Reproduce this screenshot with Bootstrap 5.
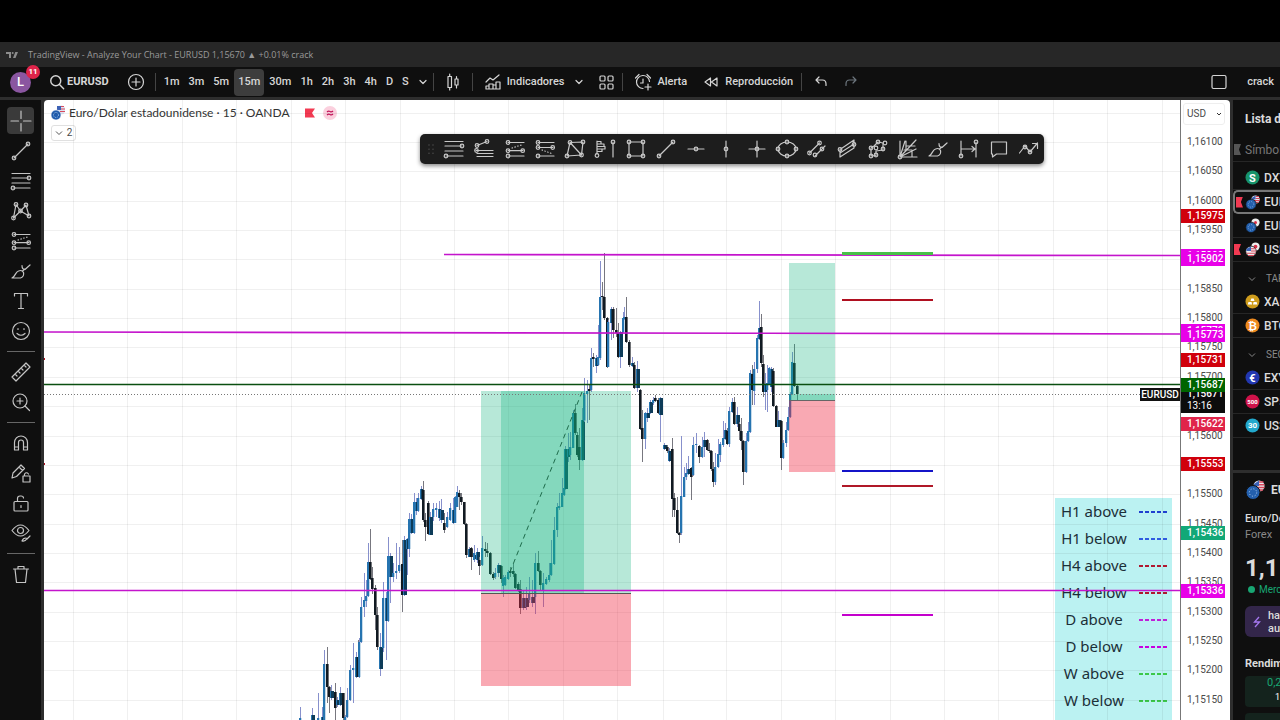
<!DOCTYPE html>
<html lang="es">
<head>
<meta charset="utf-8">
<meta name="viewport" content="width=device-width, initial-scale=1">
<title>TradingView - Analyze Your Chart</title>
<link href="https://cdn.jsdelivr.net/npm/bootstrap@5.3.0/dist/css/bootstrap.min.css" rel="stylesheet">
<style>
:root{--ui:Roboto,"Liberation Sans",sans-serif;--ink:#0f0f0f;--line:#2e2e2e;--txt:#dbdbdb}
body{font-family:var(--ui);font-size:11px;line-height:16px;background:var(--line);color:var(--txt)}
button{font:inherit;color:inherit;background:none;border:0;padding:0}
svg{display:block}
.ico{width:24px;height:24px;fill:none;stroke:currentColor;stroke-width:1.2;stroke-linecap:round;stroke-linejoin:round;flex:none}
.ico .knot{fill:var(--knot,#0f0f0f)}
.letterbox{height:42px;background:#000}
.titlebar{height:25px;background:#272727;color:#9a9a9a;font:9px/14px "Open Sans",sans-serif;padding-left:6px;gap:10px}
.topbar{height:30px;background:var(--ink);margin-bottom:3px;font-weight:500;color:#d6d6d6}
.slot{display:flex;align-items:center;justify-content:center;height:28px;gap:2px}
.w-nav{width:30px}
.w-tight{width:20px}
.w-wide{width:38px}
.w-grid{width:24px}
.compare{margin:0 4px 0 12px}
.find{margin-left:16px;gap:0}
.find .ico{width:20px;height:20px;stroke-width:1.7}
.layoutname{padding-right:6px}
.avatar{width:21px;height:21px;border-radius:50%;background:#8a56a0;color:#fff;font-size:13px;margin-left:10px;position:relative}
.avatar .count{position:absolute;left:16px;top:-7px;width:14px;height:14px;border-radius:50%;background:#e0244a;font-size:8px;line-height:14px;font-weight:700}
.vline{width:1px;height:18px;background:#444}
.tf{gap:1px}
.tf button{height:27px;padding:0 4px;border-radius:4px}
.tf .on{background:#3d3d3d}
.rail{width:41px;background:var(--ink);padding-top:6px;margin-right:3px;color:#c4c4c4}
.rail button{width:27px;height:27px;margin:1px 0 2px;border-radius:4px;display:flex;align-items:center;justify-content:center}
.rail .on{background:#3a3a3a;--knot:#3a3a3a}
.rail hr{width:28px;margin:5px 0;border-top:1px solid #666;opacity:1}
.pane{background:#fff;border-radius:4px 4px 0 0;margin-right:3px;color:#4a4a4a}
.plot{min-width:0}
.canvas{position:absolute;inset:0;width:100%;height:100%;z-index:1;pointer-events:none}
.symbolline{font:12px/16px Lato,sans-serif;color:#333;padding:5px 0 0 7px;gap:4px}
.symbolline span{margin-right:5px}
.count2{border:1px solid #e0e0e0;border-radius:3px;margin:4px 0 0 7px;width:25px;height:16px;font-size:10px}
.drawbar{position:absolute;left:376px;top:34px;width:624px;height:30px;background:#1d1d1d;border-radius:5px;color:#c8c8c8;z-index:2;padding:0 0 0 3px;box-shadow:0 2px 4px #0007;--knot:#1d1d1d}
.drawbar .grip{width:16px;flex:none}
.keybox{position:absolute;right:8px;top:398px;bottom:0;width:117px;background:#bbf2f2;color:#1c2f38;font:15px/27px "Noto Sans",sans-serif}
.keybox th{font-weight:400;text-align:center;width:78px;padding:0}
.keybox td{padding:0}
.keybox i{display:block;width:28px;height:2px;margin-left:6px}
.scale{width:50px;border-left:1px solid #777;font-size:10px;line-height:14px}
.scale .unit{height:22px;margin:3px 3px 0 2px;border:1px solid #eee;border-radius:3px;padding:0 1px 0 3px;width:42px}
.tick,.tag{position:absolute;left:0;margin-top:-7px;padding-left:6px;height:14px;width:44px}
.tag{color:#fff;font-weight:500;margin-top:-6px}
.sym{position:absolute;right:0;top:288px;height:13px;width:40px;background:#111;color:#fff;font-size:10px;line-height:13px;font-weight:500;text-align:center;z-index:2}
.side{width:47px;white-space:nowrap;overflow:hidden}
.side section{background:var(--ink)}
.side svg{flex:none}
.lists{height:370px;margin-bottom:3px}
.lists h2{height:39px;padding-left:12px;font-size:12px}
.lists .head{color:#777;padding:3px 0 0 12px;height:23px;font-weight:400}
.item{height:24px;border-bottom:1px solid #262626;font-weight:500;padding-left:12px;gap:4px;position:relative;font-size:12px}
.item.sel{border:2px solid #777;border-right:0;border-radius:5px 0 0 5px;padding-left:10px}
.grp{height:28px;padding:6px 0 0 15px;gap:10px;font-size:10px;color:#8a8a8a}
.marker{position:absolute;left:1px;width:7px;height:11px;background:#f23a52;clip-path:polygon(0 0,100% 0,70% 50%,100% 100%,0 100%)}
.head .marker{background:#555;top:5px}
.detail>*{padding-left:12px}
.pairhead{height:34px;gap:6px;font-size:12px}
.price{font-size:24px;line-height:28px;font-weight:700;padding-top:11px}
.open{color:#18a673;font-size:10px}
.open i{width:7px;height:7px;margin-left:3px;background:#18a673}
.news{background:#33264a;border-radius:6px 0 0 6px;height:31px;margin:8px 0 0 12px;line-height:13px;font-weight:500;gap:6px}
.detail .news{padding-left:7px}
.detail h3{font-size:11px;line-height:16px;padding-top:19px;padding-bottom:4px}
.perf{background:#14231d;color:#18a673;border-radius:4px;margin:0 0 6px 12px;height:31px;line-height:14px;width:60px}
.detail .perf{padding-left:22px}
.perf div{font-size:9px}
</style>
</head>
<body class="vh-100 overflow-hidden d-flex flex-column">
<svg width="0" height="0" class="position-absolute" aria-hidden="true"><defs id="defs"></defs></svg>

<div class="letterbox flex-shrink-0"></div>
<header class="titlebar d-flex align-items-center flex-shrink-0">
  <svg width="12" height="8" viewBox="0 0 12 8" fill="#8c8c8c"><path d="M0 1h5v6H3V3H0z"/><circle cx="6.7" cy="2" r="1"/><path d="M9.300 1H12L9.500 7H7z"/></svg>
  <span>TradingView - Analyze Your Chart - EURUSD 1,15670 ▲ +0.01% crack</span>
</header>

<nav class="topbar d-flex align-items-center flex-shrink-0">
  <button class="avatar slot" aria-label="Perfil">L<span class="count">11</span></button>
  <button class="slot find fw-bold"><svg class="ico" viewBox="0 0 24 24"><use href="#search"/></svg>EURUSD</button>
  <button class="slot w-nav compare" data-i="plus" aria-label="Comparar"></button>
  <span class="vline me-1"></span>
  <div class="tf d-flex" id="tf"></div>
  <button class="slot w-tight" data-i="chev" aria-label="Más intervalos"></button>
  <span class="vline"></span>
  <button class="slot w-wide" data-i="candles" aria-label="Velas"></button>
  <span class="vline me-2"></span>
  <button class="slot"><span data-i="indic"></span>Indicadores</button>
  <button class="slot w-nav" data-i="chev" aria-label="Plantillas"></button>
  <button class="slot w-grid" data-i="grid" aria-label="Disposición"></button>
  <span class="vline ms-1 me-1"></span>
  <button class="slot ps-1"><span data-i="alarm"></span>Alerta</button>
  <button class="slot ps-2 ms-1"><span data-i="rewind"></span>Reproducción</button>
  <span class="vline ms-2 me-1"></span>
  <button class="slot w-nav" data-i="undo" aria-label="Deshacer"></button>
  <button class="slot w-nav text-secondary" data-i="redo" aria-label="Rehacer"></button>
  <button class="slot ms-auto" data-i="square" aria-label="Diseño"></button>
  <button class="slot layoutname ms-3">crack</button>
</nav>

<main class="d-flex flex-fill" style="min-height:0">
  <aside class="rail d-flex flex-column align-items-center flex-shrink-0" id="rail"></aside>

  <div class="pane d-flex flex-fill overflow-hidden" style="min-width:0">
    <div class="plot position-relative flex-fill overflow-hidden">
      <div class="symbolline d-flex align-items-center">
        <svg width="14" height="16" viewBox="0 0 14 16"><circle cx="10" cy="5" r="4.500" fill="#dfe3f2"/><path d="M7 1.500h6M8 4h6M9 6.500h5" stroke="#d94a5c"/><path d="M6 1h4v4H6z" fill="#3d62b5"/><circle cx="5" cy="10" r="5" fill="#1f5cad" stroke="#fff" stroke-width=".6"/><circle cx="5" cy="10" r="2.500" fill="none" stroke="#9fc6ee" stroke-dasharray="1 1"/></svg>
        <span>Euro/Dólar estadounidense · 15 · OANDA</span>
        <svg width="38" height="16" viewBox="0 0 38 16"><path d="M6 3.500h10l-3 4.500 3 4.500H6z" fill="#f23a52"/><circle cx="31" cy="8" r="7" fill="#fbd0de"/><path d="M28 7q1.500-1.500 3-.500t3-.500M28 10q1.500-1.500 3-.500t3-.500" fill="none" stroke="#c2185b" stroke-width="1.200"/></svg>
      </div>
      <button class="count2 d-flex align-items-center justify-content-center gap-1 position-relative bg-white"><svg width="8" height="6" viewBox="0 0 8 6" fill="none" stroke="#555"><path d="M1 1.500l3 3 3-3"/></svg>2</button>
      <div class="keybox"><table><tbody id="key"></tbody></table></div>
      <svg class="canvas" id="chart" role="img" aria-label="Gráfico de velas EURUSD"></svg>
      <div class="drawbar d-flex align-items-center" id="draw"><span class="grip" data-i="grip"></span></div>
      <span class="sym">EURUSD</span>
    </div>
    <div class="scale position-relative flex-shrink-0" id="scale">
      <button class="unit d-flex align-items-center justify-content-between">USD<svg width="8" height="6" viewBox="0 0 8 6" fill="none" stroke="#333"><path d="M2 2l2 2 2-2"/></svg></button>
    </div>
  </div>

  <aside class="side flex-shrink-0 d-flex flex-column">
    <section class="lists flex-shrink-0">
      <h2 class="mb-0 fw-bold d-flex align-items-center">Lista de</h2>
      <div class="item head mb-1"><i class="marker"></i>Símbolo</div>
      <div id="l1"></div>
      <div class="grp d-flex align-items-center"><svg width="8" height="6" viewBox="0 0 8 6" fill="none" stroke="#888"><path d="M1 1.500l3 3 3-3"/></svg>TAR</div>
      <div id="l2"></div>
      <div class="grp d-flex align-items-center"><svg width="8" height="6" viewBox="0 0 8 6" fill="none" stroke="#888"><path d="M1 1.500l3 3 3-3"/></svg>SEC</div>
      <div id="l3"></div>
    </section>
    <section class="detail flex-fill">
      <div class="pairhead d-flex align-items-center fw-bold"><svg width="20" height="20" viewBox="0 0 20 20"><use href="#pairEU"/></svg>EU</div>
      <div class="fw-medium pt-1">Euro/Dó</div>
      <div style="color:#8a8a8a">Forex</div>
      <div class="price">1,1</div>
      <div class="open"><i class="d-inline-block rounded-circle me-1"></i>Merc</div>
      <div class="news d-flex align-items-center"><svg width="10" height="12" viewBox="0 0 10 12" fill="none" stroke="#a678f0" stroke-width="1.300"><path d="M7 1L2.500 6h5L3 11"/></svg><div>hac<br>aus</div></div>
      <h3 class="fw-bold mb-0">Rendim</h3>
      <div class="perf">0,2<div class="text-white ps-2">1</div></div>
      <div class="perf"></div>
    </section>
  </aside>
</main>
<script src="https://cdn.jsdelivr.net/npm/bootstrap@5.3.0/dist/js/bootstrap.bundle.min.js"></script>
<script>
const $ = id => document.getElementById(id);
const knots = (...p) => p.map(([x, y]) => `<circle class="knot" cx="${x}" cy="${y}" r="1.8"/>`).join('');
const path = d => `<path d="${d}"/>`;
const icons = {
  search: '<circle cx="10.500" cy="10.500" r="6"/>' + path('M15 15l5 5'),
  plus: '<circle cx="12" cy="12" r="7.500"/>' + path('M12 8v8M8 12h8'),
  chev: path('M9 10.500l3 3 3-3'),
  candles: path('M7 6.500h3.500v11H7zM8.700 4v2.500M8.700 17.500V20M14 9h3v6h-3zM15.500 6.500V9M15.500 15v3'),
  indic: path('M5 12l4-4 3 2 6-5M5 19v-3h3v3M8 19v-5h4v5M12 19v-4h3v4M15 19v-7h4v7zM5 19h14'),
  grid: '<rect x="6" y="6" width="5" height="5" rx="1"/><rect x="14" y="6" width="5" height="5" rx="1"/><rect x="6" y="14" width="5" height="5" rx="1"/><rect x="14" y="14" width="5" height="5" rx="1"/>',
  alarm: path('M18.500 11.500A6.500 6.500 0 1 0 12 18.500M12 9v4H9.500M4.500 8L8 4.500M16 4.500L19.500 8M17 14v6M14 17h6'),
  rewind: path('M11.500 8v8L6 12zM18 8v8l-5.500-4z'),
  undo: path('M10 7L7 10l3 3M7 10h6.500q3.500 0 3.500 4v1.500'),
  redo: path('M14 7l3 3-3 3M17 10h-6.500Q7 10 7 14v1.500'),
  square: '<rect x="5" y="5.500" width="14" height="13" rx="1.500"/>',
  cross: path('M12 2v7.500M12 14.500V22M2 12h7.500M14.500 12H22'),
  trend: path('M5 19L19 5') + knots([5, 19], [19, 5]),
  fib: path('M3 4.500h18M3 9h17M3 14h18M4 19h17') + knots([20, 9], [4, 19]),
  fibext: path('M5 8.500L15 4.500M4 13.500h17M5 16.500h16M5 19.500h16') + knots([15, 4.500], [5, 8.500], [4.500, 13.500]),
  pos: path('M5 5.500h16M5 13.700h15M5 19h16') + '<path stroke-dasharray="0.500 2.500" d="M9 11l11-3.500"/>' + knots([5, 5.500], [5, 13.700], [19.700, 13.700], [5, 19]),
  neg: path('M5 5.500h16M5 10.500h15M5 19h16') + '<path stroke-dasharray="0.500 2.500" d="M9 13l11 4"/>' + knots([5, 5.500], [5, 10.500], [19.700, 10.500], [5, 19]),
  pattern: path('M7 5.500L20 5l-1.500 13L4 19zL18.500 18') + knots([7, 5.500], [20, 5], [18.500, 18], [4, 19]),
  profile: path('M4 17V4M4 4.500h4v2.500H4M4 7h7v2.500H4M4 9.500h8V12H4M4 12h5v2.500H4M20 5v15') + knots([4, 18.500], [20, 5]),
  rect: path('M5 5h14v14H5z') + knots([5, 5], [19, 5], [19, 19], [5, 19]),
  hline: path('M4 12h16') + knots([12, 12]),
  vline: path('M12 4v16') + knots([12, 12]),
  cline: path('M4 12h16M12 4v16') + knots([12, 12]),
  ellipse: '<ellipse cx="12" cy="12" rx="9" ry="7"/>' + knots([3, 12], [21, 12], [12, 5], [12, 19]),
  pitch: path('M4.500 16L14.500 6M10 19L20 9') + knots([4.500, 16], [14.500, 6], [17, 12], [10, 18]),
  channel: path('M5 12.500L19 3v8L5 20zM5 16l14-9') + knots([5, 12.500], [19, 7.500]),
  path: path('M5 11v8l5-.500V14l7-1V6l-5-1-4 4z') + knots([5, 11], [5, 19], [10, 18], [10, 11], [17, 12], [19, 6], [12, 5]),
  fan: path('M4 20V4M4 20L9 4M4 20L20 3M4 20l16-8M4 20h17M10 14V4M10 9h9M8 13h8v7') + knots([4, 20]),
  brush: path('M3 19q4 0 8.500 0 4-1.500 3-5.500-1.500-3-5-1.500C6 13 7 17 3 19zM13 6.500q0 4 3 4L21 6M13.500 12l2.500-2'),
  range: path('M5 4v15M20 5v15M5 12h14M16 9.500l3 2.500-3 2.500') + knots([5, 19], [20, 5]),
  note: path('M4.500 5h15v12h-10l-4 3v-3h-1z'),
  zig: path('M2.500 16l5.500-7 5 6 7.500-9M15.500 6.500h5v5') + knots([8, 10], [13, 15]),
  xabcd: path('M4.500 19L7 5.500l4.500 6.500L17 6l3 11-8.500-5zM7 5.500') + knots([4.500, 19], [7, 5.500], [11.500, 12], [17, 6], [20, 17]),
  text: path('M5.500 7V4.500h13V7M12 4.500v15M9.500 19.500h5') ,
  smile: '<circle cx="12" cy="12" r="8.500"/>' + path('M9 9.500v1M15 9.500v1M8 14.500q4 3.500 8 0'),
  ruler: path('M3 17L17 3l4 4L7 21zM6 14l2 2M9 11l2 2M12 8l2 2M15 5l2 2'),
  zoom: '<circle cx="11" cy="11" r="7"/>' + path('M16 16l4.500 4.500M11 8v6M8 11h6'),
  magnet: path('M5.500 19v-7.500a6.500 6.500 0 0 1 13 0V19h-4v-7.500a2.500 2.500 0 0 0-5 0V19zM5.500 16h4M14.500 16h4'),
  penlock: path('M3 17l1-5 8-8 3.500 3.500-8 8zM10 6l3.500 3.500M14 15h7v6h-7zM15.500 15v-2q2-2.500 4 0'),
  lock: '<rect x="5" y="10.500" width="14" height="9.500" rx="1"/>' + path('M8.500 10.500V7.500q0-2.500 2.500-2.500h1q2.500 0 2.500 2M12 14.500v2'),
  eye: path('M3 9.500q8.500-11 17 0-8.500 11-17 0zM13 20q3 1 5-2.500M18 18l3-3M13 20q1-3 4-3') + '<circle cx="11.500" cy="9.500" r="3"/>',
  trash: path('M4.500 7h15M9 7V4.500h6V7M6 7l1.500 13.500h9L18 7'),
  grip: '<path stroke="#555" stroke-width="1.300" stroke-dasharray="0.100 4" d="M6 8v9M10 8v9"/>'
};
$('defs').innerHTML = Object.entries(icons).map(([k, v]) => `<g id="${k}">${v}</g>`).join('') +
 `<g id="pairEU"><circle cx="14" cy="6" r="5.500" fill="#e8e8ee"/><path d="M14 2h4.500M14 4.700h5.500M10 7.500h9.500M11 10h7" stroke="#d8475a" stroke-width="1.400"/><path d="M9 4l5-3.500V6H9z" fill="#3a63b8"/><circle cx="8" cy="12.500" r="7" fill="#2460ad" stroke="#0f0f0f"/><circle cx="8" cy="12.500" r="3.700" fill="none" stroke="#b4d0f2" stroke-dasharray="1 1.900"/></g>
  <g id="pairEJ"><circle cx="14" cy="6" r="5.500" fill="#eee"/><circle cx="14" cy="6" r="2" fill="#d8304a"/><circle cx="8" cy="12.500" r="7" fill="#2460ad" stroke="#0f0f0f"/><circle cx="8" cy="12.500" r="3.700" fill="none" stroke="#b4d0f2" stroke-dasharray="1 1.900"/></g>
  <g id="pairUJ"><circle cx="14" cy="6" r="5.500" fill="#eee"/><circle cx="14" cy="6" r="2.500" fill="#d8304a"/><circle cx="8" cy="12.500" r="7" fill="#eee" stroke="#0f0f0f"/><path d="M8 9h6M8 12h7M2 15h12M4 18h8" stroke="#d8475a" stroke-width="1.500"/><path d="M2 9l6-3v6H2z" fill="#3a63b8"/></g>`;
const icon = n => `<svg class="ico" viewBox="0 0 24 24" aria-hidden="true"><use href="#${n}"/></svg>`;

$('tf').innerHTML = '1m 3m 5m 15m 30m 1h 2h 3h 4h D S'.split(' ').map(t => `<button class="${t == '15m' ? 'on' : ''}">${t}</button>`).join('');
$('rail').innerHTML = 'cross trend fib xabcd pos brush text smile | ruler zoom | magnet penlock lock eye | trash'.split(' ')
  .map((n, i) => n == '|' ? '<hr>' : `<button aria-label="${n}" class="${i ? '' : 'on'}">${icon(n)}</button>`).join('');
$('draw').innerHTML += 'fib fibext pos neg pattern profile rect trend hline vline cline ellipse pitch channel path fan brush range note zig'.split(' ')
  .map(n => `<button class="flex-fill slot" aria-label="${n}">${icon(n)}</button>`).join('');
document.querySelectorAll('[data-i]').forEach(e => e.innerHTML = icon(e.dataset.i));

$('key').innerHTML = [['H1 above', '#1f3fd0'], ['H1 below', '#2f5be0'], ['H4 above', '#b01830'], ['H4 below', '#b01830'],
  ['D above', '#c020d8'], ['D below', '#c800e0'], ['W above', '#3cc84a'], ['W below', '#3cc84a']]
  .map(([t, c]) => `<tr><th scope="row">${t}</th><td><i style="background:repeating-linear-gradient(90deg,${c} 0 4px,transparent 4px 6px)"></i></td></tr>`).join('');

/* price scale: 1,16100 sits 42px below the top of the pane, 58.7px per 10 pips */
const yOf = p => Math.round(42 + (116100 - p) * 0.587);
const fmt = p => '1,' + String(p).slice(1);
let s = '';
for (let p = 116100; p >= 115150; p -= 50) if (![115900, 115650].includes(p)) s += `<span class="tick" style="top:${yOf(p)}px">${fmt(p)}</span>`;
for (const [p, c] of [[115908, '#e800e8'], [115902, '#e800e8'], [115779, '#e800e8'], [115773, '#e800e8'], [115975, '#d0000c'], [115731, '#d0000c'], [115671, '#0c0c0c'], [115687, '#006400'], [115622, '#e0244a'], [115553, '#d0000c'], [115436, '#12a877'], [115336, '#e800e8']])
  s += p == 115671 ? `<span class="tag" style="top:${yOf(p)}px;background:${c};height:25px;line-height:12px">${fmt(p)}<br><span class="fw-normal">13:16</span></span>`
    : `<span class="tag" style="top:${yOf(p)}px;background:${c}">${fmt(p)}</span>`;
$('scale').innerHTML += s;

/* watch list */
const disc = (c, t) => `<svg width="15" height="15" viewBox="0 0 15 15"><circle cx="7.500" cy="7.500" r="7" fill="${c}"/><text x="7.500" y="${t.length > 1 ? 10 : 11.500}" font-size="${t.length > 2 ? 6 : t.length > 1 ? 8 : 11}" font-weight="700" fill="#fff" text-anchor="middle">${t}</text></svg>`;
const gold = '<svg width="15" height="15" viewBox="0 0 15 15"><circle cx="7.500" cy="7.500" r="7" fill="#cf9d1d"/><path d="M5.500 7l.8-2.500h2.400l.8 2.500zM2.700 10.500l.8-2.500h3l.6 2.500zM8 10.500l.6-2.500h3l.8 2.500z" fill="#fff"/></svg>';
const pair = n => `<svg width="15" height="15" viewBox="0 0 20 20"><use href="#${n}"/></svg>`;
const rows = a => a.map(([t, i, f]) => `<div class="item d-flex align-items-center ${f == 2 ? 'sel' : ''}">${f ? '<i class="marker"></i>' : ''}${i}${t}</div>`).join('');
$('l1').innerHTML = rows([['DXY', disc('#17936a', 'S')], ['EUR', pair('pairEU'), 2], ['EUR', pair('pairEJ')], ['USD', pair('pairUJ'), 1]]);
$('l2').innerHTML = rows([['XAU', gold], ['BTC', disc('#ee8a1f', '₿')]]);
$('l3').innerHTML = rows([['EXY', disc('#2237b0', '€')], ['SP5', disc('#d0124a', '500')], ['US3', disc('#22a8cc', '30')]]);

/* candles: [x, top, bottom, high, low, kind] in thirds of a pixel from each block's origin;
   b rising, t dense teal, k falling */
const blocks = [
 [290, 470, `30 745 750 712 750 b|65 735 750 715 750 t|85 745 750 668 750 b|97 740 750 712 750 t|103 583 750 540 750 b|110 583 650 532 700 k|116 650 680 648 730 k|124 663 685 645 690 t|134 665 715 640 750 k|142 690 705 680 712 t|150 670 705 650 708 t|158 670 745 668 750 k|166 740 750 735 750 b|172 690 742 655 745 b|181 600 690 585 692 b|190 595 600 520 700 b|197 560 620 545 625 t|203 560 620 510 622 k|208 515 620 505 625 b|214 412 515 380 518 b|221 390 412 308 440 b|228 378 392 330 412 b|234 275 378 218 380 b|239 275 327 178 330 k|247 325 357 292 372 k|254 355 435 345 480 k|262 435 530 410 540 k|270 530 597 490 618 t|278 385 535 335 545 b|287 385 452 365 570 t|295 258 452 200 455 b|301 258 320 250 400 t|310 308 320 280 335 b|318 303 310 220 328 b|327 285 303 230 310 b|336 283 375 210 425 k|341 210 375 198 378 t|350 208 237 205 315 t|358 148 237 130 262 b|364 148 190 132 192 t|371 95 190 70 192 b|378 95 123 85 135 t|385 85 123 70 125 b|392 58 88 48 90 t|398 60 150 33 155 k|405 150 170 130 213 k|413 100 193 92 195 k|420 140 195 125 196 t|429 117 140 100 152 b|438 115 120 100 140 b|446 117 145 93 152 t|454 120 150 88 158 t|463 160 180 130 188 k|472 140 172 125 175 b|480 115 150 100 152 b|489 120 158 85 162 t|495 82 158 78 160 b|501 67 110 47 112 b|506 70 82 60 120 k|513 80 97 68 105 k|521 97 162 95 165 k|528 162 255 160 265 k|536 237 260 232 262 t|544 237 262 235 298 k|552 255 268 225 270 t|560 250 270 235 275 b`],
 [470, 380, `4 505 530 500 570 k|12 520 540 495 545 b|20 515 540 505 550 t|28 540 557 530 585 k|36 505 555 468 558 b|44 508 512 485 530 k|52 512 520 490 530 k|60 518 583 515 585 k|68 583 595 575 600 k|76 578 592 565 598 b|85 555 580 550 590 t|92 558 597 555 610 k|98 595 617 585 652 b|105 590 615 585 618 b|113 575 598 570 600 b|120 572 578 560 590 k|128 572 582 548 590 k|136 582 625 578 628 k|143 612 632 605 635 k|150 628 683 600 702 k|159 655 683 630 690 t|168 655 680 620 690 t|178 640 660 590 670 b|187 650 670 600 680 t|196 550 650 520 702 b|204 550 573 512 575 k|211 572 615 570 630 k|218 610 630 580 680 b|227 597 612 590 615 b|236 585 600 550 605 b|244 550 585 480 588 b|252 450 552 410 555 b|260 382 450 370 470 b|268 378 385 340 390 b|275 340 380 295 382 b|281 325 345 305 348 b|286 208 328 197 330 t|294 208 232 160 245 t|301 200 225 155 240 b|308 98 203 90 205 b|314 98 160 72 165 k|322 165 225 155 230 k|328 202 240 145 270 k|335 120 240 85 242 t|343 45 122 0 125 b`],
 [570, 240, `43 460 540 415 545 b|50 452 463 420 550 b|57 447 453 435 540 k|63 355 450 325 455 b|70 352 357 340 380 k|77 355 377 345 400 t|83 350 375 255 378 b|89 172 355 62 360 b|96 167 172 125 210 k|103 170 235 40 240 k|110 235 382 232 385 k|115 245 380 240 382 b|123 208 248 200 300 t|130 208 270 200 295 k|137 270 278 205 290 k|145 278 352 250 355 k|151 275 350 272 385 t|158 235 275 215 280 b|163 232 238 200 240 b|169 230 305 170 308 k|177 305 375 300 380 k|185 368 377 350 380 t|192 375 445 365 448 k|200 388 445 362 455 t|209 450 568 448 570 k|217 565 598 510 665 k|224 520 598 515 628 b|232 520 535 505 545 t|240 485 520 480 522 t|248 480 488 470 495 b|256 475 482 465 485 k|264 480 520 475 522 k|271 475 525 470 605 t|281 615 627 610 630 t|290 622 632 615 640 k|298 632 662 625 665 t|306 628 778 595 830 k|313 775 810 760 830 k|321 810 878 770 882 k|328 878 885 875 910 k|334 768 880 588 885 b|341 710 770 680 772 b|348 700 712 670 720 b|355 688 703 648 705 t`],
 [690, 240, `3 683 710 680 780 k|9 615 705 592 708 b|18 612 616 580 640 b|27 618 650 615 670 k|35 620 650 590 655 b|43 600 620 575 650 t|50 600 630 598 632 k|57 630 634 610 640 k|63 632 688 630 692 k|69 688 725 665 740 k|76 682 725 640 735 b|84 642 682 598 685 b|91 613 645 605 665 b|98 595 615 543 620 b|105 570 597 550 600 t|112 572 613 565 615 k|117 513 613 500 622 b|125 485 515 475 520 t|131 487 552 472 555 k|140 525 552 500 560 t|148 552 572 545 600 k|154 572 602 535 630 k|160 602 697 600 735 k|167 602 697 580 700 b|173 573 604 545 606 b|180 400 575 390 578 b|186 402 450 375 495 k|193 388 452 365 495 b|200 295 388 285 400 b|206 265 297 182 300 t|212 262 370 222 380 k|218 372 455 345 470 k|224 435 455 400 510 t|231 430 450 375 515 b|237 385 432 380 435 b|242 388 440 380 455 t|250 393 498 385 500 k|257 498 560 496 562 k|265 540 560 512 562 t|273 543 653 540 690 k|280 608 655 600 658 b|287 570 608 545 620 b|294 530 570 500 572 b|300 463 530 455 535 b|306 367 463 335 465 b|313 370 437 312 440 k|321 438 463 436 480 k`]
];
const H = (y, x1, x2, c, w, y2 = y) => `<line x1="${x1}" x2="${x2}" y1="${y}" y2="${y2}" stroke="${c}" stroke-width="${w}"/>`;
const R = (x, y, w, h, f) => `<rect x="${x}" y="${y}" width="${w}" height="${h}" fill="${f}"/>`;
const green = 'rgba(15,178,125,.3)', red = 'rgba(240,40,65,.4)', mag = '#c414cc';
let g = '';
for (let i = -1; i < 20; i++) g += R(0, Math.round(42 + i * 29.35), '100%', 1, '#0000000f');
for (const x of [29, 83, 138, 192, 247, 301, 356, 410, 464, 519, 573, 619, 682, 737, 791, 846, 900, 954, 1009, 1063, 1118]) g += R(x, 0, 1, '100%', '#0000000f');
for (const [ox, oy, d] of blocks) for (const c of d.split('|')) {
  const [x, t, b, h, l, k] = c.split(' ');
  const X = Math.round(ox - 44 + x / 3), Y = v => Math.round(oy - 100 + v / 3);
  g += R(X, Y(h), 1, Math.max(1, Y(l) - Y(h)), k == 'k' ? '#77777f' : '#8790cc');
  const hh = Math.max(1, Y(b) - Y(t));
  g += k == 'k' ? R(X - 1, Y(t), 2, hh, '#111a22') + R(X + 1, Y(t), 1, hh, '#11141a99')
     : k == 'b' ? R(X - 1, Y(t), 2, hh, '#2674b0') + R(X + 1, Y(t), 1, hh, '#2674b044')
     : R(X - 1, Y(t), 1, hh, '#2674b0') + R(X, Y(t), 3, hh, '#0d3b58');
}
g += R(437, 291, 150, 202, green) + R(457, 291, 83, 202, green) + R(437, 494, 150, 92, red) + R(437, 493, 150, 1, '#555')
  + '<path d="M466 472L538 292" stroke="#1d6a4a" fill="none" stroke-dasharray="5 4"/>'
  + R(745, 163, 46, 137, green) + R(747, 294, 44, 6, green) + R(745, 301, 46, 71, red) + R(745, 300, 46, 1, '#666')
  + H(154.5, 400, '100%', mag, 1.7, 155.5) + H(232, 0, '100%', mag, 1.7, 234) + R(798, 152, 91, 3, '#48c048')
  + H(284.5, 0, '100%', '#0a4f10', 1.4) + '<line x1="0" x2="100%" y1="294.500" y2="294.500" stroke="#777" stroke-dasharray="1 2"/>'
  + R(798, 199, 91, 2, '#b01020') + R(798, 370, 91, 2, '#1414c8') + R(798, 385, 91, 2, '#b01828') + R(798, 514, 91, 2, '#c400cc')
  + H(490.5, 0, '100%', mag, 1.7) + R(0, 258, 1, 2, '#b01020') + R(0, 363, 1, 2, '#b01020');
$('chart').innerHTML = g;
</script>
</body>
</html>
